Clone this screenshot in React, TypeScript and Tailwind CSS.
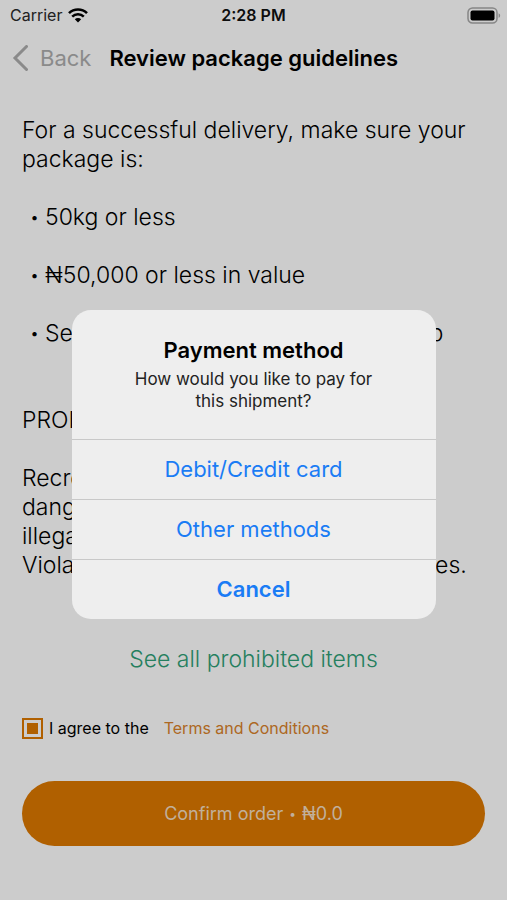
import { useState } from "react";

const rules = [
  "50kg or less",
  "₦50,000 or less in value",
  "Securely sealed and ready for pickup",
];

const prohibited = [
  "Recreational drugs, weapons,",
  "dangerous items, alcohol and",
  "illegal goods are prohibited.",
  "Violations may get reported to authorities.",
];

const StatusBar = () => (
  <div className="grid h-7 grid-cols-3 items-center px-2.5 pt-0.5 text-base">
    <div className="flex items-center gap-1.5 text-[#2a2a2a]">
      <span>Carrier</span>
      <svg viewBox="0 0 20 15" className="h-[15px] w-5 text-black" fill="none" stroke="currentColor">
        <path d="M1 5.2a12.8 12.8 0 0 1 18 0" strokeWidth="2.6" />
        <path d="M4.2 8.6a8.2 8.2 0 0 1 11.6 0" strokeWidth="2.5" />
        <path d="M10 14.4 6.8 11.2a4.6 4.6 0 0 1 6.4 0Z" fill="currentColor" stroke="none" />
      </svg>
    </div>
    <span className="text-center font-semibold text-[#111111]">2:28 PM</span>
    <svg viewBox="0 0 34 17" className="-mr-1 h-[17px] w-[34px] justify-self-end">
      <rect x="1" y="1" width="29" height="15" rx="4.5" fill="none" stroke="#a8a8a8" strokeWidth="1.5" />
      <rect x="3.5" y="3.5" width="24" height="10" rx="2" fill="#000" />
      <path d="M31.6 6.2c2 .8 2 3.8 0 4.6Z" fill="#a8a8a8" />
    </svg>
  </div>
);

const Header = () => (
  <header className="flex h-[60px] items-center gap-[18px] pl-3">
    <button type="button" className="flex items-center gap-3 text-[22px] text-[#adadad]">
      <svg viewBox="0 0 16 26" className="h-[26px] w-4" fill="none" stroke="currentColor" strokeWidth="3">
        <path d="M14.5 1.5 3 13l11.5 11.5" strokeLinecap="round" />
      </svg>
      Back
    </button>
    <h1 className="text-[22px] font-semibold text-black">Review package guidelines</h1>
  </header>
);

const PaymentDialog = () => (
  <div className="absolute inset-0 flex items-center justify-center bg-black/20 pt-7">
    <div
      role="dialog"
      aria-labelledby="pay-title"
      className="w-[364px] overflow-hidden rounded-[19px] bg-[#eeeeee] text-center"
    >
      <div className="px-12 pt-[26px] pb-[27px]">
        <h2 id="pay-title" className="text-[22px] leading-[29px] font-semibold text-black">
          Payment method
        </h2>
        <p className="mt-[3px] text-[17px] leading-[22px] text-[#222222]">
          How would you like to pay for
          <br />
          this shipment?
        </p>
      </div>
      <div className="flex flex-col text-[22px] text-[#1a7cf5]">
        <button type="button" className="h-[60px] border-t border-[#c8c8c8]">
          Debit/Credit card
        </button>
        <button type="button" className="h-[60px] border-t border-[#c8c8c8]">
          Other methods
        </button>
        <button type="button" className="h-[60px] border-t border-[#c8c8c8] font-semibold">
          Cancel
        </button>
      </div>
    </div>
  </div>
);

const App = () => {
  const [agreed, setAgreed] = useState(true);

  return (
    <div className="relative min-h-screen bg-white font-['Inter','Liberation_Sans',sans-serif]">
      <StatusBar />
      <Header />
      <main className="flex flex-col px-[22px] pt-7 text-[23px] leading-[29px] font-light text-black">
        <p>
          For a successful delivery, make sure your
          <br />
          package is:
        </p>
        <ul className="mt-[29px] flex flex-col gap-[29px] pl-2">
          {rules.map((rule) => (
            <li key={rule} className="flex gap-1.5">
              <span className="text-base leading-[29px]">•</span>
              <span className="whitespace-nowrap">{rule}</span>
            </li>
          ))}
        </ul>
        <h2 className="mt-[58px]">PROHIBITED ITEMS</h2>
        <p className="mt-[29px]">
          {prohibited.map((line) => (
            <span key={line} className="block whitespace-nowrap">
              {line}
            </span>
          ))}
        </p>
        <a href="#prohibited" className="mt-[65px] self-center text-[#2f9f77]">
          See all prohibited items
        </a>
        <div className="mt-[42px] flex items-center text-base font-normal">
          <input
            id="agree"
            type="checkbox"
            checked={agreed}
            onChange={(e) => setAgreed(e.target.checked)}
            className="size-[21px] appearance-none border-2 border-[#dc7800] bg-clip-content p-[3px] checked:bg-[#dc7800]"
          />
          <label htmlFor="agree" className="ml-1.5">
            I agree to the
          </label>
          <a href="#terms" className="ml-[15px] text-[#d9822b]">
            Terms and Conditions
          </a>
        </div>
        <button
          type="button"
          className="mt-[41px] flex h-[65px] items-center justify-center gap-1.5 rounded-full bg-[#dc7800] text-lg font-normal text-[#f2dcc2]"
        >
          <span>Confirm order</span>
          <span className="text-xs">•</span>
          <span>₦0.0</span>
        </button>
      </main>
      <PaymentDialog />
    </div>
  );
};

export default App;
